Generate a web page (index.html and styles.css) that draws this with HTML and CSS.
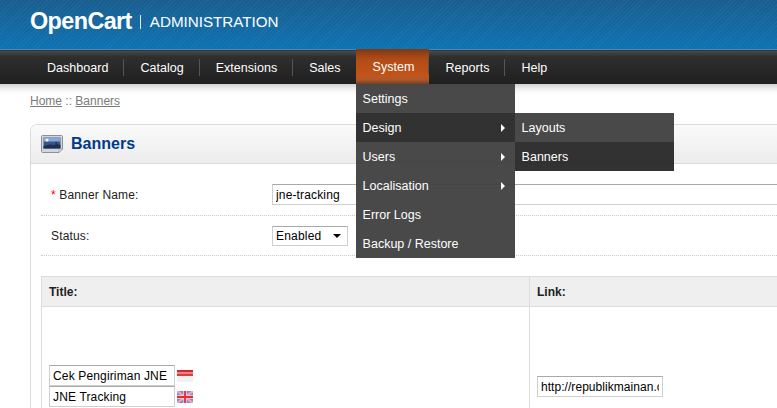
FILE: index.html
```html
<!DOCTYPE html>
<html lang="en">
<head>
    <meta charset="UTF-8">
    <title>Banners</title>
    <link rel="stylesheet" href="styles.css">
</head>
<body>
    <!-- Topo -->
    <div class="header">
        <span class="logo">OpenCart</span>
        <span class="logo-sep"></span>
        <span class="logo-sub">ADMINISTRATION</span>
    </div>
    <!-- Menu principal -->
    <div class="menu">
        <a class="menu-item">Dashboard</a>
        <a class="menu-item">Catalog</a>
        <a class="menu-item">Extensions</a>
        <a class="menu-item no-sep">Sales</a>
        <div class="menu-item active">System
            <div class="dropdown">
                <a class="drop-item">Settings</a>
                <div class="drop-item open parent">Design
                    <div class="dropdown sub">
                        <a class="drop-item">Layouts</a>
                        <a class="drop-item dark">Banners</a>
                    </div>
                </div>
                <a class="drop-item parent">Users</a>
                <a class="drop-item parent">Localisation</a>
                <a class="drop-item">Error Logs</a>
                <a class="drop-item">Backup / Restore</a>
            </div>
        </div>
        <a class="menu-item">Reports</a>
        <a class="menu-item no-sep">Help</a>
    </div>
    <div class="content">
        <div class="breadcrumb"><a>Home</a> :: <a>Banners</a></div>
        <div class="box">
            <div class="heading">
                <svg class="heading-icon" width="22" height="18" viewBox="0 0 22 18">
                    <path d="M1.5 .5 H20.5 Q21.5 .5 21.5 1.5 V14 L18 17.5 H1.5 Q.5 17.5 .5 16.5 V1.5 Q.5 .5 1.5 .5 Z" fill="#d3d5d9" stroke="#8b8f96"/>
                    <rect x="2.5" y="2.5" width="17" height="11" fill="#3a5688"/>
                    <rect x="2.5" y="2.5" width="17" height="4" fill="#8aa6d2"/>
                    <path d="M2.5 11 L9 9.5 L14 10 L15 6 L16 9 L19.5 10 V13.5 H2.5 Z" fill="#1d2f55"/>
                    <circle cx="6" cy="5" r="1.6" fill="#eef3fa"/>
                    <path d="M18 17.5 V14 H21.5 Z" fill="#f2f2f2" stroke="#8b8f96" stroke-width=".6"/>
                </svg>
                <h1>Banners</h1>
            </div>
            <div class="box-body">
                <div class="form-row">
                    <label class="form-label"><span class="required">*</span> Banner Name:</label>
                    <input class="field field-name" type="text" value="jne-tracking">
                </div>
                <div class="form-row">
                    <label class="form-label">Status:</label>
                    <div class="fake-select">Enabled<span class="caret"></span></div>
                </div>
                <div class="list">
                    <div class="list-head">
                        <div class="col-title">Title:</div>
                        <div class="col-link">Link:</div>
                    </div>
                    <div class="list-body">
                        <div class="col-title">
                            <div class="lang-row">
                                <input class="field field-title" type="text" value="Cek Pengiriman JNE">
                                <svg class="flag" width="16" height="12" viewBox="0 0 16 12">
                                    <rect width="16" height="12" fill="#f1f1f1"/>
                                    <rect width="16" height="6" fill="#df3a40"/>
                                    <rect width="16" height="1.5" fill="#c9242c"/>
                                    <rect y="2" width="16" height="2" fill="#ec7f80"/>
                                </svg>
                            </div>
                            <div class="lang-row">
                                <input class="field field-title" type="text" value="JNE Tracking">
                                <svg class="flag" width="16" height="12" viewBox="0 0 16 12">
                                    <rect width="16" height="12" fill="#7f8bd0"/>
                                    <path d="M0 0 L16 12 M16 0 L0 12" stroke="#f0a9b4" stroke-width="2.2"/>
                                    <path d="M8 0 V12 M0 6 H16" stroke="#f6d9dc" stroke-width="3.4"/>
                                    <path d="M8 0 V12 M0 6 H16" stroke="#e62a38" stroke-width="1.8"/>
                                </svg>
                            </div>
                        </div>
                        <div class="col-link">
                            <input class="field field-link" type="text" value="http://republikmainan.com/">
                        </div>
                    </div>
                </div>
            </div>
        </div>
    </div>
</body>
</html>
```

FILE: styles.css
```css
html, body {
    margin: 0;
    height: 100%;
    overflow: hidden;
}
body {
    width: 777px;
    font-family: "Liberation Sans", Arial, sans-serif;
    font-size: 12px;
    color: #000;
    background: #fff;
}
.header {
    height: 50px;
    padding-left: 30px;
    display: flex;
    align-items: center;
    box-sizing: border-box;
    color: #fff;
    background:
        repeating-linear-gradient(135deg, rgba(255,255,255,.04) 0 1px, transparent 1px 3px),
        linear-gradient(#1a5d8f, #0e72b2);
    border-bottom: 1px solid #4f87ad;
}
.logo {
    font-size: 23.4px;
    font-weight: bold;
    letter-spacing: -0.6px;
    position: relative;
    top: -3px;
}
.logo-sep {
    width: 1px;
    height: 14px;
    margin: 0 9px 0 8px;
    background: #dcebf5;
    position: relative;
    top: -3px;
}
.logo-sub {
    font-size: 15.2px;
    position: relative;
    top: -3px;
}
.menu {
    height: 34px;
    padding-left: 31px;
    display: flex;
    align-items: stretch;
    background: linear-gradient(#4a4a4a, #2e2e2e 18%, #202020);
    border-top: 1px solid #2a3a48;
    box-sizing: border-box;
}
.menu-item {
    position: relative;
    display: flex;
    align-items: center;
    padding: 0 16px 0 16px;
    font-size: 12.5px;
    letter-spacing: 0.03px;
    color: #fff;
}
.menu-item::after {
    content: "";
    position: absolute;
    right: 0;
    top: 8px;
    height: 17px;
    width: 1px;
    background: #555;
}
.menu-item.no-sep {
    padding-right: 15px;
}
.menu-item.no-sep::after {
    display: none;
}
.menu-item.active {
    margin-top: -2px;
    padding: 0 15px 0 17px;
    background: linear-gradient(#7d3914, #b24c16 30%, #c3541a 78%, #a85a30 88%, #7a3d1c);
}
.dropdown {
    position: absolute;
    left: 0;
    top: 100%;
    width: 159px;
    background: #404040;
    opacity: 0.95;
    z-index: 5;
}
.dropdown.sub {
    left: 159px;
    top: 0;
    opacity: 1;
}
.drop-item {
    position: relative;
    display: block;
    box-sizing: border-box;
    height: 29px;
    line-height: 31px;
    padding-left: 7px;
    font-size: 12.5px;
    letter-spacing: 0;
    color: #fff;
    background: #404040;
}
.drop-item.open, .drop-item.dark {
    background: #282828;
}
.drop-item.parent::after {
    content: "";
    position: absolute;
    right: 10px;
    top: 11px;
    border-left: 4px solid #fff;
    border-top: 4px solid transparent;
    border-bottom: 4px solid transparent;
}
.content {
    padding: 0 0 0 30px;
    box-shadow: inset 0 10px 8px -8px #bbb;
    width: 900px;
}
.breadcrumb {
    height: 40px;
    line-height: 34px;
    color: #7a7a7a;
}
.breadcrumb a {
    color: #7a7a7a;
    text-decoration: underline;
}
.box {
    width: 870px;
    border: 1px solid #dbdbdb;
    border-radius: 7px 7px 0 0;
}
.heading {
    height: 39px;
    display: flex;
    align-items: center;
    padding-left: 10px;
    box-sizing: border-box;
    background: linear-gradient(#fafafa, #ececec);
    border-bottom: 1px solid #dbdbdb;
    border-radius: 7px 7px 0 0;
}
.heading-icon {
    margin-right: 8px;
}
.heading h1 {
    margin: 0;
    font-size: 16px;
    font-weight: bold;
    color: #003a88;
}
.box-body {
    padding: 0 10px;
}
.form-row {
    display: flex;
    align-items: center;
    height: 40px;
    border-bottom: 1px dotted #ccc;
    padding-left: 10px;
    box-sizing: border-box;
}
.box-body > .form-row:first-child {
    height: 52px;
    padding-top: 10px;
}
.form-label {
    width: 221px;
    color: #222;
    letter-spacing: 0.15px;
}
.required {
    color: #f00;
}
.field {
    font: 12px "Liberation Sans", Arial, sans-serif;
    letter-spacing: 0.15px;
    color: #000;
    border: 1px solid #cfcfcf;
    border-top-color: #a9a9a9;
    padding: 2px 3px;
    box-sizing: border-box;
    height: 21px;
    background: #fff;
}
.field-name {
    width: 600px;
}
.fake-select {
    display: flex;
    align-items: center;
    justify-content: space-between;
    width: 76px;
    height: 20px;
    padding: 0 6px 0 3px;
    box-sizing: border-box;
    letter-spacing: 0.2px;
    border: 1px solid #cfcfcf;
    border-top-color: #a9a9a9;
}
.caret {
    border-top: 4px solid #000;
    border-left: 4px solid transparent;
    border-right: 4px solid transparent;
}
.list {
    margin-top: 20px;
    width: 900px;
    border-left: 1px solid #ddd;
}
.list-head, .list-body {
    display: flex;
}
.list-head {
    height: 31px;
    box-sizing: border-box;
    background: #efefef;
    border-top: 1px solid #ddd;
    border-bottom: 1px solid #ddd;
    align-items: center;
    font-weight: bold;
    color: #222;
}
.col-title {
    width: 488px;
    box-sizing: border-box;
    padding-left: 7px;
    border-right: 1px solid #ddd;
}
.col-link {
    padding-left: 7px;
}
.list-head .col-title, .list-head .col-link {
    height: 100%;
    display: flex;
    align-items: center;
}
.list-body {
    height: 110px;
    padding-top: 0;
}
.list-body .col-title {
    padding-top: 58px;
}
.list-body .col-link {
    padding-top: 69px;
}
.lang-row {
    display: flex;
    align-items: center;
}
.field-title {
    width: 126px;
}
.field-link {
    width: 126px;
    letter-spacing: 0.05px;
}
.flag {
    margin-left: 2px;
}
```
